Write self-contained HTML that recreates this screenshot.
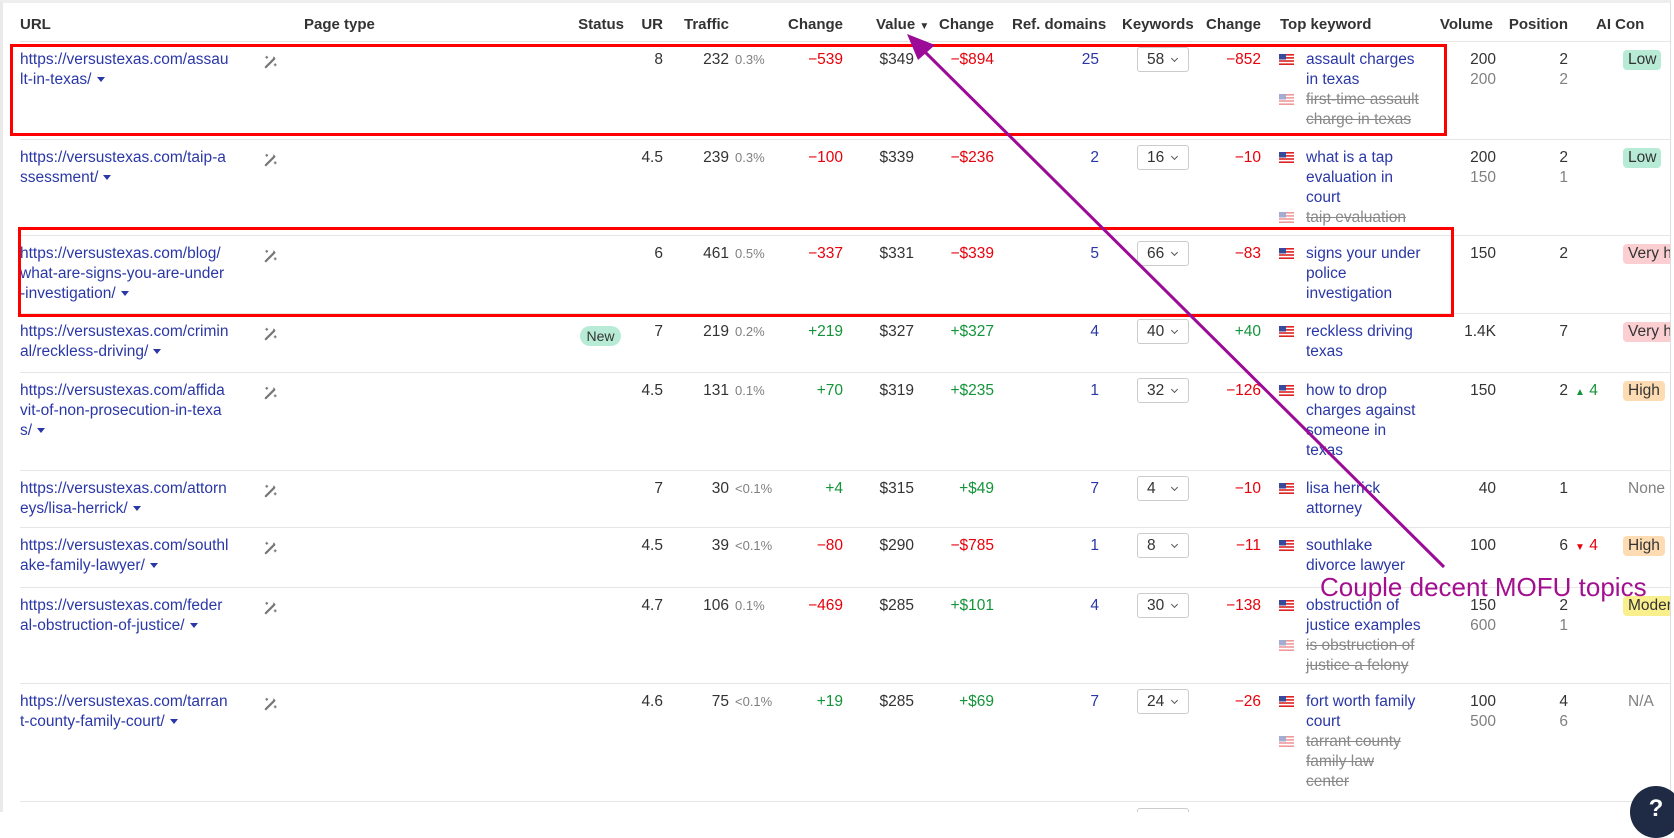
<!DOCTYPE html>
<html><head><meta charset="utf-8"><style>
*{margin:0;padding:0;box-sizing:border-box}
body{width:1674px;height:812px;overflow:hidden;background:#fff;font-family:"Liberation Sans",Arial,sans-serif;font-size:15.5px;color:#333;position:relative}
#t{position:absolute;left:0;top:0;width:1671px;height:812px;overflow:hidden;border-right:1px solid #ddd;border-left:3px solid #eaeaea;border-top:3px solid #eee}
.a{position:absolute;white-space:nowrap;line-height:20px}
.h{font-weight:bold;top:12px;color:#333;font-size:15px}
.rw{position:absolute;left:0;width:1671px}
.u{left:17px;color:#2a37a6}
.w{left:260px;top:13px}
.ur{right:1011px}.tr{right:945px}.pct{left:732px;font-size:13px;color:#808080}
.ch{right:831px}.val{right:760px}.ch2{right:680px}.ref{right:575px;color:#2a37a6}
.sel{left:1134px;top:6px;width:52px;height:25px;border:1px solid #ccc;border-radius:3px;line-height:23px;padding-left:9px}
.sel:after{content:"";position:absolute;left:34px;top:8px;width:4px;height:4px;border-right:1.3px solid #555;border-bottom:1.3px solid #555;transform:rotate(45deg)}
.ch3{right:413px}.fl{left:1276px}.kw{left:1303px;color:#2a37a6}
.vol{right:178px}.pos{right:106px}.ai{left:1620px;padding:0 5px;border-radius:4px;height:20px}
.r{color:#e8000b}.g{color:#14943a}.gr{color:#808080}.s{color:#888;text-decoration:line-through}
.tri{display:inline-block;width:0;height:0;border-left:4px solid transparent;border-right:4px solid transparent;border-top:5px solid #2a37a6;margin-left:5px;vertical-align:2px}
.sp{position:absolute;left:17px;width:1660px;border-top:1px solid #e6e6e6}
</style></head><body>
<svg width="0" height="0" style="position:absolute"><defs>
<symbol id="us" viewBox="0 0 15 11"><rect width="15" height="11" fill="#fff"/><g fill="#d22"><rect y="0" width="15" height="1.6"/><rect y="3.1" width="15" height="1.6"/><rect y="6.2" width="15" height="1.6"/><rect y="9.4" width="15" height="1.6"/></g><rect width="7" height="5.5" fill="#3a4a9a"/></symbol>
<symbol id="wd" viewBox="0 0 16 16"><path d="M3 14 L12 5" stroke="#777" stroke-width="2.4" stroke-linecap="round"/><path d="M11 3l1.5 1.5M4 2v3M2.5 3.5h3M13 10v3M11.5 11.5h3" stroke="#777" stroke-width="1.2"/></symbol>
</defs></svg>
<div id="t">
<div class="a h" style="left:17px">URL</div>
<div class="a h" style="left:301px">Page type</div>
<div class="a h" style="right:1046px">Status</div>
<div class="a h" style="right:1007px">UR</div>
<div class="a h" style="left:681px">Traffic</div>
<div class="a h" style="right:827px">Change</div>
<div class="a h" style="left:873px">Value <span style="font-size:10px">&#9660;</span></div>
<div class="a h" style="right:676px">Change</div>
<div class="a h" style="left:1009px">Ref. domains</div>
<div class="a h" style="left:1119px">Keywords</div>
<div class="a h" style="right:409px">Change</div>
<div class="a h" style="left:1277px">Top keyword</div>
<div class="a h" style="right:177px">Volume</div>
<div class="a h" style="right:102px">Position</div>
<div class="a h" style="left:1593px">AI Con</div>
<div class="sp" style="top:38px"></div>

<!-- row1 -->
<div class="rw" style="top:38px;height:98px">
<div class="a u" style="top:9px">https://versustexas.com/assau<br>lt-in-texas/<span class="tri"></span></div>
<svg class="a w" width="15" height="15"><use href="#wd"/></svg>
<div class="a ur" style="top:9px">8</div><div class="a tr" style="top:9px">232</div><div class="a pct" style="top:9px">0.3%</div>
<div class="a ch r" style="top:9px">−539</div><div class="a val" style="top:9px">$349</div><div class="a ch2 r" style="top:9px">−$894</div>
<div class="a ref" style="top:9px">25</div><div class="a sel">58</div><div class="a ch3 r" style="top:9px">−852</div>
<svg class="a fl" style="top:13px" width="15" height="11"><use href="#us"/></svg><div class="a kw" style="top:9px">assault charges<br>in texas</div>
<svg class="a fl" style="top:53px;opacity:.45" width="15" height="11"><use href="#us"/></svg><div class="a kw s" style="top:49px">first-time assault<br>charge in texas</div>
<div class="a vol" style="top:9px">200<br><span class="gr">200</span></div><div class="a pos" style="top:9px">2<br><span class="gr">2</span></div>
<div class="a ai" style="top:9px;background:#b7ebd6">Low</div>
</div>
<!-- row2 -->
<div class="rw" style="top:136px;height:96px">
<div class="a u" style="top:9px">https://versustexas.com/taip-a<br>ssessment/<span class="tri"></span></div>
<svg class="a w" width="15" height="15"><use href="#wd"/></svg>
<div class="a ur" style="top:9px">4.5</div><div class="a tr" style="top:9px">239</div><div class="a pct" style="top:9px">0.3%</div>
<div class="a ch r" style="top:9px">−100</div><div class="a val" style="top:9px">$339</div><div class="a ch2 r" style="top:9px">−$236</div>
<div class="a ref" style="top:9px">2</div><div class="a sel">16</div><div class="a ch3 r" style="top:9px">−10</div>
<svg class="a fl" style="top:13px" width="15" height="11"><use href="#us"/></svg><div class="a kw" style="top:9px">what is a tap<br>evaluation in<br>court</div>
<svg class="a fl" style="top:73px;opacity:.45" width="15" height="11"><use href="#us"/></svg><div class="a kw s" style="top:69px">taip evaluation</div>
<div class="a vol" style="top:9px">200<br><span class="gr">150</span></div><div class="a pos" style="top:9px">2<br><span class="gr">1</span></div>
<div class="a ai" style="top:9px;background:#b7ebd6">Low</div>
</div>
<!-- row3 -->
<div class="rw" style="top:232px;height:78px">
<div class="a u" style="top:9px">https://versustexas.com/blog/<br>what-are-signs-you-are-under<br>-investigation/<span class="tri"></span></div>
<svg class="a w" width="15" height="15"><use href="#wd"/></svg>
<div class="a ur" style="top:9px">6</div><div class="a tr" style="top:9px">461</div><div class="a pct" style="top:9px">0.5%</div>
<div class="a ch r" style="top:9px">−337</div><div class="a val" style="top:9px">$331</div><div class="a ch2 r" style="top:9px">−$339</div>
<div class="a ref" style="top:9px">5</div><div class="a sel">66</div><div class="a ch3 r" style="top:9px">−83</div>
<svg class="a fl" style="top:13px" width="15" height="11"><use href="#us"/></svg><div class="a kw" style="top:9px">signs your under<br>police<br>investigation</div>
<div class="a vol" style="top:9px">150</div><div class="a pos" style="top:9px">2</div>
<div class="a ai" style="top:9px;background:#fbcfd1">Very high</div>
</div>
<!-- row4 -->
<div class="rw" style="top:310px;height:59px">
<div class="a u" style="top:9px">https://versustexas.com/crimin<br>al/reckless-driving/<span class="tri"></span></div>
<svg class="a w" width="15" height="15"><use href="#wd"/></svg>
<div class="a" style="left:577px;top:13px;width:41px;height:20px;border-radius:10px;background:#b7ebd6;text-align:center;font-size:14px">New</div>
<div class="a ur" style="top:9px">7</div><div class="a tr" style="top:9px">219</div><div class="a pct" style="top:9px">0.2%</div>
<div class="a ch g" style="top:9px">+219</div><div class="a val" style="top:9px">$327</div><div class="a ch2 g" style="top:9px">+$327</div>
<div class="a ref" style="top:9px">4</div><div class="a sel">40</div><div class="a ch3 g" style="top:9px">+40</div>
<svg class="a fl" style="top:13px" width="15" height="11"><use href="#us"/></svg><div class="a kw" style="top:9px">reckless driving<br>texas</div>
<div class="a vol" style="top:9px">1.4K</div><div class="a pos" style="top:9px">7</div>
<div class="a ai" style="top:9px;background:#fbcfd1">Very high</div>
</div>
<!-- row5 -->
<div class="rw" style="top:369px;height:98px">
<div class="a u" style="top:9px">https://versustexas.com/affida<br>vit-of-non-prosecution-in-texa<br>s/<span class="tri"></span></div>
<svg class="a w" width="15" height="15"><use href="#wd"/></svg>
<div class="a ur" style="top:9px">4.5</div><div class="a tr" style="top:9px">131</div><div class="a pct" style="top:9px">0.1%</div>
<div class="a ch g" style="top:9px">+70</div><div class="a val" style="top:9px">$319</div><div class="a ch2 g" style="top:9px">+$235</div>
<div class="a ref" style="top:9px">1</div><div class="a sel">32</div><div class="a ch3 r" style="top:9px">−126</div>
<svg class="a fl" style="top:13px" width="15" height="11"><use href="#us"/></svg><div class="a kw" style="top:9px">how to drop<br>charges against<br>someone in<br>texas</div>
<div class="a vol" style="top:9px">150</div><div class="a pos" style="top:9px">2</div><div class="a g" style="left:1572px;top:9px"><span style="font-size:10px">&#9650;</span> 4</div>
<div class="a ai" style="top:9px;background:#fddcb3">High</div>
</div>
<!-- row6 -->
<div class="rw" style="top:467px;height:57px">
<div class="a u" style="top:9px">https://versustexas.com/attorn<br>eys/lisa-herrick/<span class="tri"></span></div>
<svg class="a w" width="15" height="15"><use href="#wd"/></svg>
<div class="a ur" style="top:9px">7</div><div class="a tr" style="top:9px">30</div><div class="a pct" style="top:9px">&lt;0.1%</div>
<div class="a ch g" style="top:9px">+4</div><div class="a val" style="top:9px">$315</div><div class="a ch2 g" style="top:9px">+$49</div>
<div class="a ref" style="top:9px">7</div><div class="a sel">4</div><div class="a ch3 r" style="top:9px">−10</div>
<svg class="a fl" style="top:13px" width="15" height="11"><use href="#us"/></svg><div class="a kw" style="top:9px">lisa herrick<br>attorney</div>
<div class="a vol" style="top:9px">40</div><div class="a pos" style="top:9px">1</div>
<div class="a ai gr" style="top:9px">None</div>
</div>
<!-- row7 -->
<div class="rw" style="top:524px;height:60px">
<div class="a u" style="top:9px">https://versustexas.com/southl<br>ake-family-lawyer/<span class="tri"></span></div>
<svg class="a w" width="15" height="15"><use href="#wd"/></svg>
<div class="a ur" style="top:9px">4.5</div><div class="a tr" style="top:9px">39</div><div class="a pct" style="top:9px">&lt;0.1%</div>
<div class="a ch r" style="top:9px">−80</div><div class="a val" style="top:9px">$290</div><div class="a ch2 r" style="top:9px">−$785</div>
<div class="a ref" style="top:9px">1</div><div class="a sel">8</div><div class="a ch3 r" style="top:9px">−11</div>
<svg class="a fl" style="top:13px" width="15" height="11"><use href="#us"/></svg><div class="a kw" style="top:9px">southlake<br>divorce lawyer</div>
<div class="a vol" style="top:9px">100</div><div class="a pos" style="top:9px">6</div><div class="a r" style="left:1572px;top:9px"><span style="font-size:10px">&#9660;</span> 4</div>
<div class="a ai" style="top:9px;background:#fddcb3">High</div>
</div>
<!-- row8 -->
<div class="rw" style="top:584px;height:96px">
<div class="a u" style="top:9px">https://versustexas.com/feder<br>al-obstruction-of-justice/<span class="tri"></span></div>
<svg class="a w" width="15" height="15"><use href="#wd"/></svg>
<div class="a ur" style="top:9px">4.7</div><div class="a tr" style="top:9px">106</div><div class="a pct" style="top:9px">0.1%</div>
<div class="a ch r" style="top:9px">−469</div><div class="a val" style="top:9px">$285</div><div class="a ch2 g" style="top:9px">+$101</div>
<div class="a ref" style="top:9px">4</div><div class="a sel">30</div><div class="a ch3 r" style="top:9px">−138</div>
<svg class="a fl" style="top:13px" width="15" height="11"><use href="#us"/></svg><div class="a kw" style="top:9px">obstruction of<br>justice examples</div>
<svg class="a fl" style="top:53px;opacity:.45" width="15" height="11"><use href="#us"/></svg><div class="a kw s" style="top:49px">is obstruction of<br>justice a felony</div>
<div class="a vol" style="top:9px">150<br><span class="gr">600</span></div><div class="a pos" style="top:9px">2<br><span class="gr">1</span></div>
<div class="a ai" style="top:9px;background:#f9ef8c">Moderate</div>
</div>
<!-- row9 -->
<div class="rw" style="top:680px;height:118px">
<div class="a u" style="top:9px">https://versustexas.com/tarran<br>t-county-family-court/<span class="tri"></span></div>
<svg class="a w" width="15" height="15"><use href="#wd"/></svg>
<div class="a ur" style="top:9px">4.6</div><div class="a tr" style="top:9px">75</div><div class="a pct" style="top:9px">&lt;0.1%</div>
<div class="a ch g" style="top:9px">+19</div><div class="a val" style="top:9px">$285</div><div class="a ch2 g" style="top:9px">+$69</div>
<div class="a ref" style="top:9px">7</div><div class="a sel">24</div><div class="a ch3 r" style="top:9px">−26</div>
<svg class="a fl" style="top:13px" width="15" height="11"><use href="#us"/></svg><div class="a kw" style="top:9px">fort worth family<br>court</div>
<svg class="a fl" style="top:53px;opacity:.45" width="15" height="11"><use href="#us"/></svg><div class="a kw s" style="top:49px">tarrant county<br>family law<br>center</div>
<div class="a vol" style="top:9px">100<br><span class="gr">500</span></div><div class="a pos" style="top:9px">4<br><span class="gr">6</span></div>
<div class="a ai gr" style="top:9px">N/A</div>
</div>
<div style="position:absolute;left:1134px;top:805px;width:52px;height:20px;border:1px solid #ccc;border-radius:3px"></div>
<div class="sp" style="top:136px"></div>
<div class="sp" style="top:232px"></div>
<div class="sp" style="top:310px"></div>
<div class="sp" style="top:369px"></div>
<div class="sp" style="top:467px"></div>
<div class="sp" style="top:524px"></div>
<div class="sp" style="top:584px"></div>
<div class="sp" style="top:680px"></div>
<div class="sp" style="top:798px"></div>
</div>
<!-- annotations -->
<div style="position:absolute;left:10px;top:44px;width:1437px;height:92px;border:3px solid #f00"></div>
<div style="position:absolute;left:18px;top:227px;width:1436px;height:90px;border:3px solid #f00"></div>
<svg style="position:absolute;left:0;top:0" width="1674" height="812">
<line x1="1444" y1="567" x2="920" y2="47" stroke="#9c0b97" stroke-width="3"/>
<polygon points="907,34 935,45 918,60" fill="#9c0b97"/>
</svg>
<div class="a" style="left:1320px;top:572px;font-size:26px;line-height:30px;color:#a3108f">Couple decent MOFU topics</div>
<div style="position:absolute;left:1630px;top:786px;width:52px;height:52px;border-radius:50%;background:#1f2a44;color:#fff;font-weight:bold;font-size:24px;text-align:center;line-height:46px">?</div>
</body></html>
